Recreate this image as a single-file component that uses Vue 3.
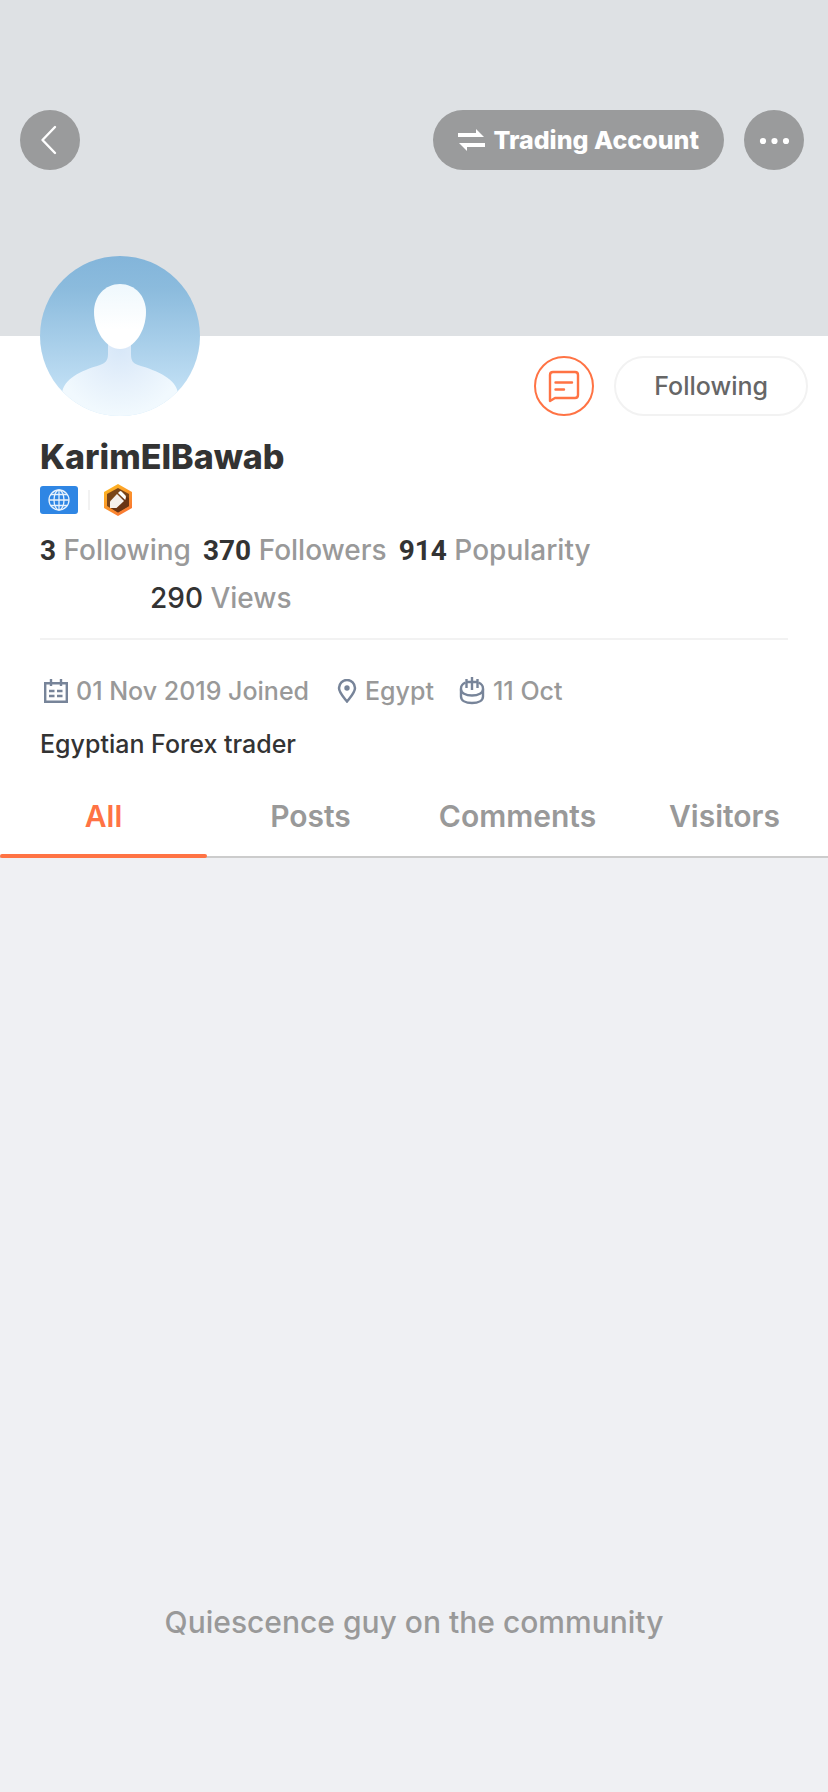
<script setup>
import { ref } from 'vue'

const stats = [
  { value: '3', label: 'Following' },
  { value: '370', label: 'Followers' },
  { value: '914', label: 'Popularity' },
]
const tabs = ['All', 'Posts', 'Comments', 'Visitors']
const active = ref('All')
</script>

<template>
  <main class="page">
    <header class="cover">
      <button class="round" aria-label="Back">
        <svg width="60" height="60" viewBox="0 0 60 60" fill="none" stroke="#fff" stroke-width="2.4" stroke-linecap="round" stroke-linejoin="round">
          <path d="M35 17L22.5 30L35 43" />
        </svg>
      </button>
      <button class="trading">
        <svg width="27" height="24" viewBox="0 0 27 24" fill="#fff">
          <path d="M0 5H18V1L26 9H0Z" />
          <path d="M27 15H1L9 23V19H27Z" />
        </svg>
        <span>Trading Account</span>
      </button>
      <button class="round" aria-label="More">
        <svg width="60" height="60" viewBox="0 0 60 60" fill="#fff">
          <circle cx="19" cy="31" r="3.1" />
          <circle cx="30.5" cy="31" r="3.1" />
          <circle cx="42" cy="31" r="3.1" />
        </svg>
      </button>
    </header>

    <section class="profile">
      <div class="top">
        <svg class="avatar" width="160" height="160" viewBox="0 0 160 160" role="img" aria-label="Profile photo">
          <defs>
            <linearGradient id="sky" x1="0" y1="0" x2="0" y2="1">
              <stop offset="0" stop-color="#83b5da" />
              <stop offset="0.2" stop-color="#8bbbdd" />
              <stop offset="0.85" stop-color="#c2e0f5" />
              <stop offset="1" stop-color="#cbe7f9" />
            </linearGradient>
            <linearGradient id="face" x1="0" y1="0" x2="0" y2="1">
              <stop offset="0" stop-color="#eff8fd" />
              <stop offset="0.7" stop-color="#fff" />
            </linearGradient>
            <radialGradient id="body" gradientUnits="userSpaceOnUse" cx="80" cy="92" r="66">
              <stop offset="0" stop-color="#d7e7f8" />
              <stop offset="0.5" stop-color="#e5f0fb" />
              <stop offset="1" stop-color="#f1f9fe" />
            </radialGradient>
            <clipPath id="disc"><circle cx="80" cy="80" r="80" /></clipPath>
          </defs>
          <g clip-path="url(#disc)">
            <rect width="160" height="160" fill="url(#sky)" />
            <path d="M68 84V98C68 105 65 107 60 109C40 115 24 123 22 137V160H138V137C136 123 118 115 98 109C93 107 91 105 91 98V84Z" fill="url(#body)" />
            <path d="M80 28C95 28 106 40 106 56C106 75 94 93 80 93C66 93 54 75 54 56C54 40 65 28 80 28Z" fill="url(#face)" />
          </g>
        </svg>
        <div class="actions">
          <button class="message" aria-label="Message">
            <svg width="60" height="60" viewBox="0 0 60 60" fill="none" stroke="#ff7344" stroke-width="2.4" stroke-linecap="round" stroke-linejoin="round">
              <circle cx="30" cy="30" r="29" stroke-width="2" />
              <path d="M16 45V19Q16 16 19 16H41Q44 16 44 19V39Q44 42 41 42H21Z" />
              <path d="M21.5 26.5H38M21.5 33.5H30" />
            </svg>
          </button>
          <button class="following">Following</button>
        </div>
      </div>

      <h1>KarimElBawab</h1>

      <div class="badges">
        <span class="globe">
          <svg width="24" height="24" viewBox="0 0 24 24" fill="none" stroke="#e6f1fc" stroke-width="1.3">
            <circle cx="12" cy="12" r="10" />
            <ellipse cx="12" cy="12" rx="5" ry="10" />
            <path d="M12 2V22M2 12H22M4 6.5H20M4 17.5H20" />
          </svg>
        </span>
        <span class="bar"></span>
        <svg width="28" height="32" viewBox="0 0 28 32">
          <defs>
            <linearGradient id="gold" x1="0" y1="0" x2="0.6" y2="1">
              <stop offset="0" stop-color="#ffc020" />
              <stop offset="1" stop-color="#f97832" />
            </linearGradient>
          </defs>
          <path d="M14 0L28 8V24L14 32L0 24V8Z" fill="url(#gold)" />
          <path d="M14 4L25 10V22L14 28.5L3 22V10Z" fill="#7a4518" />
          <path d="M25 14V22L14 28.5L7 24L20 12Z" fill="#693414" />
          <path d="M6 24V17.5L13 10L20 17L12.5 24Z" fill="#f5f0ec" />
          <path d="M14 9L15.5 7.5Q16.5 6.5 17.5 7.5L21.5 11.5Q22.3 12.5 21.8 14L21.2 16Z" fill="#fff" />
        </svg>
      </div>

      <div class="stats">
        <span v-for="s in stats" :key="s.label"><b>{{ s.value }}</b> {{ s.label }}</span>
      </div>
      <div class="views"><em>290</em> Views</div>

      <div class="meta">
        <span class="joined">
          <svg width="24" height="24" viewBox="0 0 24 24" fill="none" stroke="#778499" stroke-width="2.4">
            <path d="M1.2 4.2H22.8V22.8H1.2ZM7 0V7M17 0V7" />
            <path d="M5 12H10.5M13 12H18.5M5 17H10.5M13 17H18.5" />
          </svg>
          01 Nov 2019 Joined
        </span>
        <span class="place">
          <svg width="20" height="24" viewBox="0 0 20 24" fill="none" stroke="#778499" stroke-width="2.5">
            <path d="M10 22.5C6 17.5 2 13.5 2 9A8 8 0 0 1 18 9C18 13.5 14 17.5 10 22.5Z" />
            <circle cx="10" cy="9" r="2.7" fill="#778499" stroke="none" />
          </svg>
          Egypt
        </span>
        <span class="birth">
          <svg width="26" height="28" viewBox="0 0 26 28" fill="none" stroke="#778499" stroke-width="2.4">
            <path d="M6.5 5.5C3.5 6.8 2 9 2 11.5V19.5C2 23.5 6.5 26 13 26S24 23.5 24 19.5V11.5C24 9 22.5 6.8 19.5 5.5" />
            <path d="M2 12.5C2 16 6.5 18.5 13 18.5S24 16 24 12.5" />
            <path d="M7.5 2V11M13 0V13M18.5 2V11M8 5H18" />
          </svg>
          11 Oct
        </span>
      </div>

      <p class="bio">Egyptian Forex trader</p>

      <nav class="tabs">
        <button v-for="t in tabs" :key="t" :class="{ on: t === active }" @click="active = t">{{ t }}</button>
      </nav>
    </section>

    <section class="feed">
      <p>Quiescence guy on the community</p>
    </section>
  </main>
</template>

<style>
body {
  margin: 0;
  background: #eff0f3;
}
</style>

<style scoped>
* {
  box-sizing: border-box;
}
.page {
  min-height: 100vh;
  display: flex;
  flex-direction: column;
  font-family: Inter, "Liberation Sans", sans-serif;
  color: #999;
  font-weight: 500;
}
button {
  font: inherit;
  color: inherit;
  border: 0;
  padding: 0;
  margin: 0;
  background: none;
  cursor: pointer;
}
svg {
  display: block;
  flex: none;
}
.cover {
  height: 336px;
  padding: 110px 24px 0 20px;
  background: #dee1e4;
  display: flex;
  align-items: flex-start;
  gap: 20px;
}
.round {
  width: 60px;
  height: 60px;
  border-radius: 50%;
  background: #9a9b9c;
}
.trading {
  margin-left: auto;
  height: 60px;
  padding: 0 25px;
  border-radius: 30px;
  background: #9a9b9c;
  color: #fff;
  font-size: 25px;
  font-weight: 800;
  display: flex;
  align-items: center;
  gap: 8px;
}
.profile {
  background: #fff;
}
.top {
  display: flex;
  justify-content: space-between;
  padding: 0 20px 0 40px;
}
.avatar {
  margin-top: -80px;
}
.actions {
  display: flex;
  gap: 20px;
  padding-top: 20px;
}
.message {
  width: 60px;
  height: 60px;
}
.following {
  height: 60px;
  padding: 0 38px;
  border: 2px solid #f2f2f2;
  border-radius: 30px;
  color: #666;
  font-size: 25px;
}
h1 {
  margin: 21px 40px 0;
  font-size: 34px;
  line-height: 40px;
  font-weight: 800;
  color: #333;
}
.badges {
  margin: 7px 40px 0;
  display: flex;
  align-items: center;
}
.globe {
  width: 38px;
  height: 28px;
  border-radius: 3px;
  background: #2f86e4;
  display: flex;
  align-items: center;
  justify-content: center;
}
.bar {
  width: 2px;
  height: 20px;
  margin: 0 14px 0 10px;
  background: #f2f2f2;
}
.stats {
  margin: 10px 40px 0;
  display: flex;
  gap: 12px;
  font-size: 28px;
  line-height: 48px;
}
.stats b {
  font-family: Roboto, sans-serif;
  font-weight: 700;
  line-height: 1;
  color: #333;
}
.views {
  margin: 0 40px;
  padding: 0 0 16px 110px;
  border-bottom: 2px solid #f2f2f2;
  font-size: 28px;
  line-height: 48px;
}
.views em {
  font-style: normal;
  color: #333;
}
.meta {
  margin: 35px 40px 0;
  display: flex;
  font-size: 25px;
  line-height: 32px;
}
.meta span {
  display: flex;
  align-items: center;
  gap: 8px;
}
.joined {
  padding-left: 4px;
}
.place {
  margin-left: 28px;
}
.birth {
  margin-left: 25px;
}
.bio {
  margin: 21px 40px 0;
  font-size: 25px;
  line-height: 32px;
  color: #333;
}
.tabs {
  margin-top: 16px;
  display: grid;
  grid-template-columns: repeat(4, 1fr);
  border-bottom: 2px solid #ccc;
}
.tabs button {
  position: relative;
  height: 80px;
  font-size: 30px;
  font-weight: 600;
}
.tabs .on {
  color: #ff7344;
}
.tabs .on::after {
  content: "";
  position: absolute;
  left: 0;
  right: 0;
  bottom: -2px;
  height: 4px;
  border-radius: 2px;
  background: #ff7344;
}
.feed {
  flex: 1;
  display: flex;
  align-items: flex-end;
  justify-content: center;
  padding-bottom: 150px;
  background: #eff0f3;
}
.feed p {
  margin: 0;
  font-size: 30px;
  line-height: 40px;
}
</style>
